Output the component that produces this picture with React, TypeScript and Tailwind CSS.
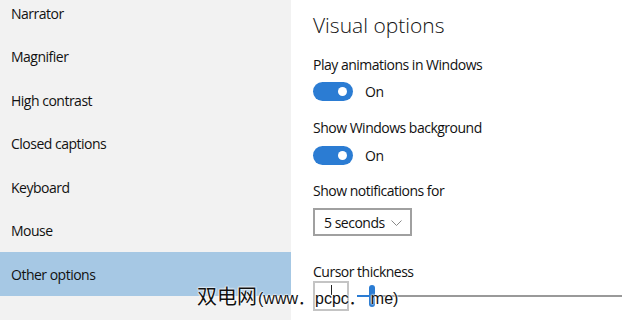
import React from 'react';

const navItems = ['Narrator', 'Magnifier', 'High contrast', 'Closed captions', 'Keyboard', 'Mouse', 'Other options'];

const Toggle = () => (
    <div className="flex items-center h-[19px]">
        <div className="relative w-[40px] h-[19px] rounded-full bg-[#2b7cd3]">
            <div className="absolute right-[6px] top-[5px] w-[9px] h-[9px] rounded-full bg-white" />
        </div>
        <span className="ml-[12px] text-[14px] text-[#111]">On</span>
    </div>
);

const Label = ({ children, className = '' }: { children: React.ReactNode; className?: string }) => (
    <div className={`h-[20px] leading-[20px] text-[14px] text-[#111] ${className}`}>{children}</div>
);

export default function App() {
    return (
        <div className="relative w-[640px] h-[320px] overflow-hidden flex bg-white font-['Open_Sans',sans-serif] tracking-[-0.5px]">
            {/* Sidebar */}
            <aside className="w-[291px] h-full bg-[#f2f2f2] shrink-0">
                <div className="mt-[-8.75px]">
                    {navItems.map((item) => (
                        <div
                            key={item}
                            className={`h-[43.5px] flex items-center pl-[11px] text-[14px] text-[#111] ${item === 'Other options' ? 'bg-[#a6c8e4]' : ''}`}
                        >
                            {item}
                        </div>
                    ))}
                </div>
            </aside>

            {/* Content */}
            <main className="flex-1 pl-[22px] flex flex-col">
                <h1 className="mt-[11px] h-[28px] leading-[28px] text-[21px] font-light text-[#111] tracking-normal">Visual options</h1>

                <Label className="mt-[16px]">Play animations in Windows</Label>
                <div className="mt-[7px]"><Toggle /></div>

                <Label className="mt-[17px]">Show Windows background</Label>
                <div className="mt-[8px]"><Toggle /></div>

                <Label className="mt-[16px]">Show notifications for</Label>
                <div className="mt-[7px] w-[99px] h-[28px] border-2 border-[#a0a0a0] flex items-center pl-[9px] pr-[8px] justify-between">
                    <span className="text-[14px] text-[#111]">5 seconds</span>
                    <svg width="11" height="6" viewBox="0 0 11 6" className="mt-[1px]">
                        <path d="M0.5 0.5 L5.5 5.5 L10.5 0.5" fill="none" stroke="#888" strokeWidth="1" />
                    </svg>
                </div>

                <Label className="mt-[26px]">Cursor thickness</Label>
                <div className="mt-[-1px] flex items-start">
                    <div className="relative w-[36px] h-[30px] border-2 border-[#c4c4c4]">
                        <div className="absolute left-[16px] top-[2px] w-[1px] h-[10px] bg-[#222]" />
                    </div>
                    <div className="relative ml-[8px] mt-[4px] w-[265px] h-[22px] flex items-center">
                        <div className="h-[2px] w-[12px] bg-[#2b7cd3]" />
                        <div className="w-[6px] h-[22px] rounded-full bg-[#2b7cd3]" />
                        <div className="h-[2px] flex-1 bg-[#999]" />
                    </div>
                </div>
            </main>

            {/* Watermark */}
            <div className="absolute left-[197px] top-[284px] leading-[24px] tracking-normal text-[#111] font-['Liberation_Sans','Noto_Sans_CJK_SC',sans-serif] [text-shadow:0_0_2px_#fff,0_0_2px_#fff,0_0_2px_#fff] whitespace-nowrap">
                <span className="text-[20px] font-['Noto_Sans_CJK_SC',sans-serif]">双电网</span>
                <span className="text-[16px] ml-[1px]">(www</span>
                <span className="text-[16px] font-['Noto_Sans_CJK_SC',sans-serif]">．</span>
                <span className="text-[16px] ml-[1px]">pcpc</span>
                <span className="text-[16px] font-['Noto_Sans_CJK_SC',sans-serif]">．</span>
                <span className="text-[16px] ml-[6px]">me)</span>
            </div>
        </div>
    );
}
